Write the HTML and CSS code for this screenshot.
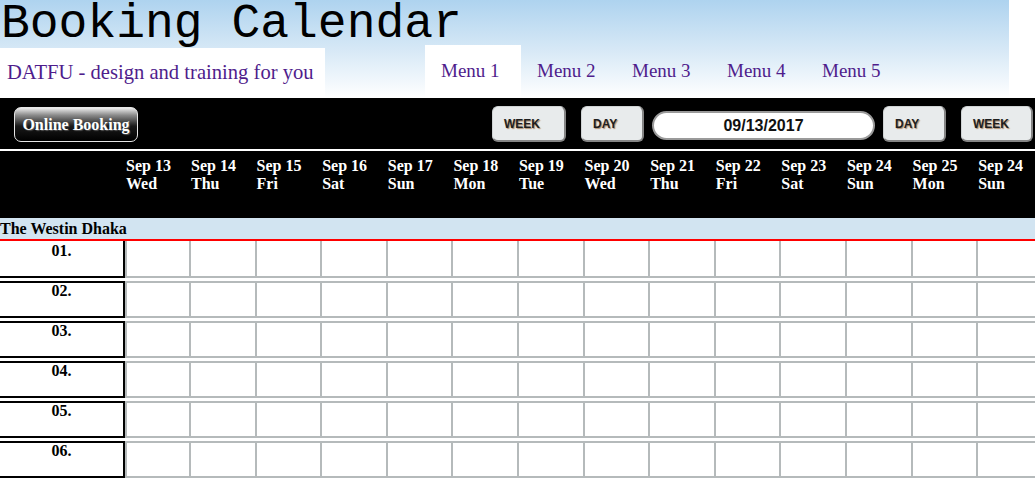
FILE: index.html
```html
<!DOCTYPE html>
<html lang="en">
<head>
<meta charset="utf-8">
<title>Booking Calendar</title>
<link rel="stylesheet" href="styles.css">
</head>
<body>
<header class="masthead">
  <h1 class="title">Booking Calendar</h1>
  <div class="nav">
    <div class="brand">DATFU - design and training for you</div>
    <ul class="menu">
      <li class="tab active">Menu 1</li>
      <li class="tab">Menu 2</li>
      <li class="tab">Menu 3</li>
      <li class="tab">Menu 4</li>
      <li class="tab">Menu 5</li>
    </ul>
  </div>
</header>

<div class="toolbar">
  <button class="online">Online Booking</button>
  <div class="controls">
    <button class="nav-btn btn-week">WEEK</button>
    <button class="nav-btn btn-day gap-wide">DAY</button>
    <div class="date">09/13/2017</div>
    <button class="nav-btn btn-day gap-narrow">DAY</button>
    <button class="nav-btn btn-week btn-last gap-wide">WEEK</button>
  </div>
</div>

<div class="days grid">
  <div class="corner"></div>
  <div class="day first">Sep 13<br>Wed</div>
  <div class="day">Sep 14<br>Thu</div>
  <div class="day">Sep 15<br>Fri</div>
  <div class="day">Sep 16<br>Sat</div>
  <div class="day">Sep 17<br>Sun</div>
  <div class="day">Sep 18<br>Mon</div>
  <div class="day">Sep 19<br>Tue</div>
  <div class="day">Sep 20<br>Wed</div>
  <div class="day">Sep 21<br>Thu</div>
  <div class="day">Sep 22<br>Fri</div>
  <div class="day">Sep 23<br>Sat</div>
  <div class="day">Sep 24<br>Sun</div>
  <div class="day">Sep 25<br>Mon</div>
  <div class="day">Sep 24<br>Sun</div>
</div>

<div class="hotel">The Westin Dhaka</div>

<div class="rows">
  <div class="row grid">
    <div class="room">01.</div>
    <div class="cell"></div><div class="cell"></div><div class="cell"></div><div class="cell"></div><div class="cell"></div><div class="cell"></div><div class="cell"></div>
    <div class="cell"></div><div class="cell"></div><div class="cell"></div><div class="cell"></div><div class="cell"></div><div class="cell"></div><div class="cell"></div>
  </div>
  <div class="row grid">
    <div class="room">02.</div>
    <div class="cell"></div><div class="cell"></div><div class="cell"></div><div class="cell"></div><div class="cell"></div><div class="cell"></div><div class="cell"></div>
    <div class="cell"></div><div class="cell"></div><div class="cell"></div><div class="cell"></div><div class="cell"></div><div class="cell"></div><div class="cell"></div>
  </div>
  <div class="row grid">
    <div class="room">03.</div>
    <div class="cell"></div><div class="cell"></div><div class="cell"></div><div class="cell"></div><div class="cell"></div><div class="cell"></div><div class="cell"></div>
    <div class="cell"></div><div class="cell"></div><div class="cell"></div><div class="cell"></div><div class="cell"></div><div class="cell"></div><div class="cell"></div>
  </div>
  <div class="row grid">
    <div class="room">04.</div>
    <div class="cell"></div><div class="cell"></div><div class="cell"></div><div class="cell"></div><div class="cell"></div><div class="cell"></div><div class="cell"></div>
    <div class="cell"></div><div class="cell"></div><div class="cell"></div><div class="cell"></div><div class="cell"></div><div class="cell"></div><div class="cell"></div>
  </div>
  <div class="row grid">
    <div class="room">05.</div>
    <div class="cell"></div><div class="cell"></div><div class="cell"></div><div class="cell"></div><div class="cell"></div><div class="cell"></div><div class="cell"></div>
    <div class="cell"></div><div class="cell"></div><div class="cell"></div><div class="cell"></div><div class="cell"></div><div class="cell"></div><div class="cell"></div>
  </div>
  <div class="row grid">
    <div class="room">06.</div>
    <div class="cell"></div><div class="cell"></div><div class="cell"></div><div class="cell"></div><div class="cell"></div><div class="cell"></div><div class="cell"></div>
    <div class="cell"></div><div class="cell"></div><div class="cell"></div><div class="cell"></div><div class="cell"></div><div class="cell"></div><div class="cell"></div>
  </div>
</div>
</body>
</html>
```

FILE: styles.css
```css
* { box-sizing: border-box; }

html, body {
  margin: 0;
  padding: 0;
  background: #fff;
  overflow: hidden;
}

body {
  font-family: "Liberation Serif", "Times New Roman", serif;
  width: 1035px;
}

/* ---------- masthead ---------- */
.masthead {
  width: 1009px;
  height: 98px;
  padding-bottom: 1px;
  background: linear-gradient(to bottom, #aed3ef 0%, #d6e8f6 50%, #ffffff 100%);
}

.title {
  margin: 0;
  padding-left: 1px;
  height: 48px;
  font-family: "Liberation Mono", "DejaVu Sans Mono", monospace;
  font-weight: normal;
  font-size: 48px;
  line-height: 48px;
  color: #000;
  white-space: nowrap;
}

.nav {
  display: flex;
  align-items: flex-end;
  height: 49px;
}

.brand {
  width: 325px;
  height: 49px;
  padding: 12px 0 0 7px;
  background: #fff;
  color: #4f1d8c;
  font-size: 20.6px;
  line-height: 24px;
  white-space: nowrap;
}

.menu {
  display: flex;
  margin: 0 0 0 100px;
  padding: 0;
  list-style: none;
}

.tab {
  width: 95px;
  height: 52px;
  padding: 15px 0 0 16px;
  color: #4f1d8c;
  font-size: 19px;
  line-height: 22px;
  white-space: nowrap;
}

.tab.active {
  width: 96px;
  background: #fff;
}

/* ---------- toolbar ---------- */
.toolbar {
  display: flex;
  align-items: center;
  justify-content: space-between;
  height: 51px;
  padding: 0 2px 0 14px;
  background: #000;
  border-bottom: 2px solid #fff;
  box-sizing: content-box;
}

.online {
  width: 124px;
  height: 35px;
  margin-top: 2px;
  padding: 0;
  border: 1px solid #e6e6e6;
  border-radius: 7px;
  background: linear-gradient(to bottom, #ececec 0%, #8a8a8a 22%, #1a1a1a 55%, #000 100%);
  color: #fff;
  font-family: "Liberation Serif", "Times New Roman", serif;
  font-weight: bold;
  font-size: 16px;
  text-shadow: 1px 1px 1px #555;
  text-align: center;
}

.controls {
  display: flex;
  align-items: center;
}

.nav-btn {
  height: 36px;
  margin-top: 1px;
  padding: 0 0 0 11px;
  border: 1px solid #cfd3d4;
  border-right: 2px solid #858585;
  border-bottom: 2px solid #858585;
  border-radius: 6px;
  background: #e8ebec;
  color: #1e1e1e;
  font-family: "Liberation Sans", Arial, sans-serif;
  font-weight: bold;
  font-size: 12px;
  text-align: left;
  text-shadow: 1px 1px 1px #b08a6a;
}

.btn-week { width: 74px; }
.btn-day { width: 63px; }
.btn-last { width: 72px; }
.gap-wide { margin-left: 15px; }
.gap-narrow { margin-left: 8px; }

.date {
  width: 223px;
  height: 29px;
  margin-left: 8px;
  margin-top: 3px;
  border: 2px solid #9a9a9a;
  border-radius: 15px;
  background: #fff;
  color: #111;
  font-family: "Liberation Sans", Arial, sans-serif;
  font-weight: bold;
  font-size: 16px;
  line-height: 25px;
  text-align: center;
}

/* ---------- calendar grid ---------- */
.grid {
  display: grid;
  grid-template-columns: 125px 64px repeat(13, 65.6px);
}

.days {
  height: 67px;
  padding-top: 6px;
  background: #000;
}

.day {
  padding-left: 2px;
  color: #fff;
  font-weight: bold;
  font-size: 16px;
  line-height: 18px;
  white-space: nowrap;
}

.day.first { padding-left: 1px; }

.hotel {
  height: 23px;
  padding-top: 1px;
  background: #d2e4f1;
  border-bottom: 2px solid #ff0000;
  color: #000;
  font-weight: bold;
  font-size: 16px;
  line-height: 20px;
  white-space: nowrap;
}

.row {
  height: 37px;
  margin-bottom: 3px;
}

.room {
  border-top: 2px solid #000;
  border-right: 2px solid #000;
  border-bottom: 2px solid #000;
  text-align: center;
  color: #000;
  font-weight: bold;
  font-size: 16px;
  line-height: 16px;
}

.cell {
  border-top: 2px solid #b5babb;
  border-bottom: 2px solid #b5babb;
  border-left: 2px solid #b5babb;
  background: #fff;
}

.row:first-child .room,
.row:first-child .cell {
  border-top: none;
}

.row:first-child .room {
  padding-top: 2px;
}
```
